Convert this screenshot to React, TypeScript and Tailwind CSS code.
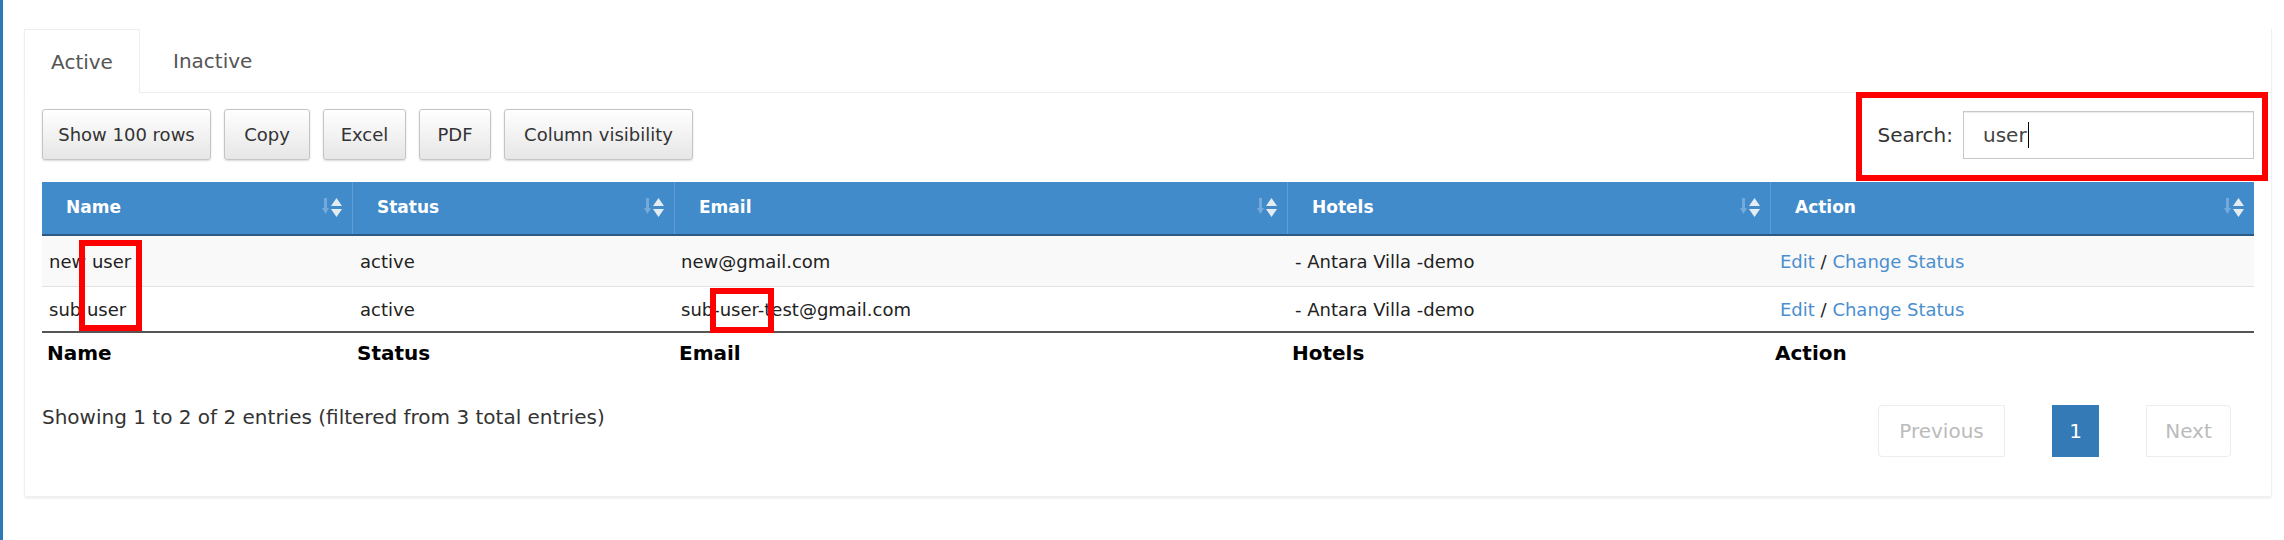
import React from "react";

const columns = [
  { label: "Name", w: "w-[310px]" },
  { label: "Status", w: "w-[322px]" },
  { label: "Email", w: "w-[613px]" },
  { label: "Hotels", w: "w-[483px]" },
  { label: "Action", w: "w-[484px]" },
];

const rows = [
  { name: "new user", status: "active", email: "new@gmail.com", hotels: "- Antara Villa -demo" },
  { name: "sub user", status: "active", email: "sub-user-test@gmail.com", hotels: "- Antara Villa -demo" },
];

function SortIcon() {
  return (
    <svg width="22" height="26" viewBox="0 0 22 26">
      <rect x="2" y="3" width="3" height="11" fill="#74a9dc" />
      <polygon points="0,13 3.5,19 7,13" fill="#74a9dc" />
      <polygon points="9,11 14.5,3 20,11" fill="#e3ebf3" />
      <polygon points="9,14 20,14 14.5,22" fill="#e3ebf3" />
    </svg>
  );
}

function ToolButton({ label, w }: { label: string; w: string }) {
  return (
    <button
      className={`${w} h-[51px] rounded-[3px] border border-[#c4c4c4] bg-gradient-to-b from-white to-[#e6e6e6] text-[18px] text-[#333] shadow-[0_1px_2px_rgba(0,0,0,0.15)]`}
    >
      {label}
    </button>
  );
}

function RedBox({ className }: { className: string }) {
  return <div className={`absolute border-[6px] border-[#ff0000] pointer-events-none ${className}`} />;
}

export default function App() {
  return (
    <div className="flex min-h-[540px] bg-white text-[#333]" style={{ fontFamily: '"DejaVu Sans", sans-serif' }}>
      <div className="w-[3px] shrink-0 bg-[#2b79b8]" />
      <div className="relative flex-1 pl-[21px] pr-[16px] pt-[29px]">
        <div className="h-[468px] border-x border-b border-[#efefef] rounded-b-[3px] shadow-[0_2px_2px_rgba(0,0,0,0.06)]">
          {/* tabs */}
          <div className="flex h-[64px] border-b border-[#eee]">
            <div className="-ml-px -mb-px w-[116px] border-x border-t border-[#eee] bg-white flex items-center justify-center text-[20px] text-[#555]">
              Active
            </div>
            <div className="ml-[33px] flex items-center text-[20px] text-[#555]">Inactive</div>
          </div>

          <div className="px-[17px]">
            {/* toolbar */}
            <div className="mt-[16px] flex items-center justify-between">
              <div className="flex gap-[13px]">
                <ToolButton label="Show 100 rows" w="w-[169px]" />
                <ToolButton label="Copy" w="w-[86px]" />
                <ToolButton label="Excel" w="w-[83px]" />
                <ToolButton label="PDF" w="w-[72px]" />
                <ToolButton label="Column visibility" w="w-[189px]" />
              </div>
              <div className="flex items-center gap-[10px]">
                <span className="text-[20px] text-[#333]">Search:</span>
                <div className="w-[291px] h-[48px] border-[1.5px] border-[#c8c8c8] shadow-[inset_0_1px_1px_rgba(0,0,0,0.08)] flex items-center pl-[19px] text-[20px] text-[#444]">
                  user
                  <span className="ml-px w-px h-[26px] bg-black" />
                </div>
              </div>
            </div>

            {/* table */}
            <div className="mt-[22px]">
              <div className="flex h-[54px] bg-[#428bca] border-b-2 border-[#2c5a82]">
                {columns.map((c, i) => (
                  <div
                    key={c.label}
                    className={`${c.w} flex items-center justify-between pl-[24px] pr-[8px] ${i > 0 ? "border-l border-[#5f9dd3]" : ""}`}
                  >
                    <span className="text-[17px] font-bold text-white">{c.label}</span>
                    <SortIcon />
                  </div>
                ))}
              </div>

              {rows.map((r, idx) => (
                <div
                  key={r.email}
                  className={`flex items-center text-[18px] text-[#222] ${idx === 0 ? "h-[51px] bg-[#f9f9f9] border-b border-[#e2e2e2]" : "h-[46px] bg-white border-b-2 border-[#555]"}`}
                >
                  <div className="w-[310px] pl-[7px]">{r.name}</div>
                  <div className="w-[322px] pl-[8px]">{r.status}</div>
                  <div className="w-[613px] pl-[7px]">{r.email}</div>
                  <div className="w-[483px] pl-[8px]">{r.hotels}</div>
                  <div className="w-[484px] pl-[10px]">
                    <a className="text-[#4a8fcf]">Edit</a> / <a className="text-[#4a8fcf]">Change Status</a>
                  </div>
                </div>
              ))}

              <div className="flex h-[40px] items-center text-[20px] font-bold text-black">
                {columns.map((c) => (
                  <div key={c.label} className={`${c.w} pl-[5px]`}>
                    {c.label}
                  </div>
                ))}
              </div>
            </div>

            {/* info + pagination */}
            <div className="mt-[32px] flex items-start justify-between">
              <div className="mt-[-3px] text-[20px] text-[#333]">
                Showing 1 to 2 of 2 entries (filtered from 3 total entries)
              </div>
              <div className="flex items-center gap-[47px] pr-[23px]">
                <div className="w-[127px] h-[52px] rounded-l-[4px] border border-[#ececec] flex items-center justify-center text-[20px] text-[#bbb]">
                  Previous
                </div>
                <div className="w-[47px] h-[52px] bg-[#337ab7] flex items-center justify-center text-[20px] text-white">
                  1
                </div>
                <div className="w-[85px] h-[52px] rounded-r-[4px] border border-[#ececec] flex items-center justify-center text-[20px] text-[#bbb]">
                  Next
                </div>
              </div>
            </div>
          </div>
        </div>

        {/* annotation boxes */}
        <RedBox className="left-[76px] top-[240px] w-[63px] h-[91px]" />
        <RedBox className="left-[707px] top-[288px] w-[64px] h-[45px]" />
        <RedBox className="left-[1853px] top-[92px] w-[412px] h-[89px]" />
      </div>
    </div>
  );
}
